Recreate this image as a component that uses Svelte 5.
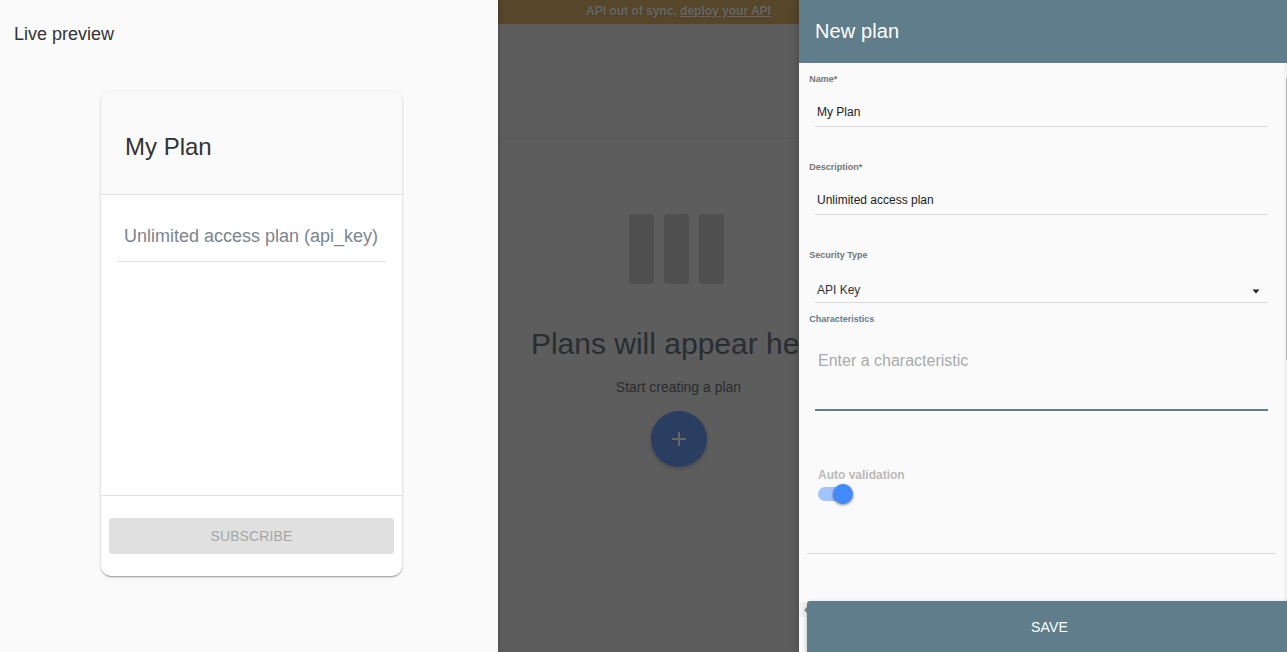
<script>
  let name = $state('My Plan');
  let description = $state('Unlimited access plan');
  let autoValidation = $state(true);
</script>

<div class="app">
  <section class="preview">
    <h2>Live preview</h2>
    <article class="card">
      <header>{name}</header>
      <div class="features">
        <p>{description} (api_key)</p>
      </div>
      <footer><button class="subscribe" disabled>SUBSCRIBE</button></footer>
    </article>
  </section>

  <main class="backdrop">
    <div class="inner">
      <div class="banner"><span>API out of sync, <a href="#deploy">deploy your API</a></span></div>
      <div class="toolbar"></div>
      <div class="columns"><i></i><i></i><i></i></div>
      <h1>Plans will appear here</h1>
      <p class="hint">Start creating a plan</p>
      <button class="fab" aria-label="Add plan">
        <svg width="24" height="24" viewBox="0 0 24 24"><path d="M19 13h-6v6h-2v-6H5v-2h6V5h2v6h6z" fill="currentColor" /></svg>
      </button>
    </div>
  </main>

  <aside class="panel">
    <header class="title">New plan</header>
    <div class="body">
      <div class="form">
        <div class="field">
          <label for="name">Name*</label>
          <input id="name" bind:value={name} />
        </div>
        <div class="field">
          <label for="desc">Description*</label>
          <input id="desc" bind:value={description} />
        </div>
        <div class="field select">
          <span class="label">Security Type</span>
          <div class="value">
            <span>API Key</span>
            <svg width="8" height="5" viewBox="0 0 8 5"><path d="M0.5 0.5h7L4 4.5z" fill="#212121" /></svg>
          </div>
        </div>
        <div class="field chips">
          <span class="label">Characteristics</span>
          <div class="entry">Enter a characteristic</div>
        </div>
        <div class="auto">
          <span>Auto validation</span>
          <button class="switch" class:on={autoValidation} aria-label="Auto validation" onclick={() => (autoValidation = !autoValidation)}>
            <i></i>
          </button>
        </div>
      </div>
      <div class="track"><div class="thumb"></div></div>
    </div>
    <div class="bottom">
      <div class="hscroll"><svg width="3" height="8" viewBox="0 0 3 8"><path d="M3 1v6L0 4z" fill="#8b8b8b" /></svg></div>
      <button class="save">SAVE</button>
    </div>
  </aside>
</div>

<style>
  :global(body) { margin: 0; overflow: hidden; }
  .app, .app * { box-sizing: border-box; }
  .app {
    display: grid;
    grid-template-columns: 498px 301px 488px;
    width: 1287px;
    height: 652px;
    overflow: hidden;
    font-family: "Liberation Sans", Arial, sans-serif;
    color: #333;
  }
  h1, h2, p { margin: 0; font-weight: 400; }
  button { border: 0; padding: 0; font-family: inherit; }

  .preview { background: #fafafa; z-index: 1; box-shadow: 0 0 6px rgba(0, 0, 0, .24); }
  .preview h2 { padding: 23px 14px 0; font-size: 18px; line-height: 22px; height: 91px; }
  .card {
    display: flex;
    flex-direction: column;
    width: 301px;
    height: 485px;
    margin-left: 101px;
    background: #fff;
    border-radius: 10px;
    overflow: hidden;
    box-shadow: 0 1px 3px 0 rgba(0, 0, 0, .2), 0 1px 1px 0 rgba(0, 0, 0, .14), 0 2px 1px -1px rgba(0, 0, 0, .12);
  }
  .card header {
    height: 104px;
    padding: 8px 24px 0;
    line-height: 96px;
    font-size: 24px;
    background: #fafafa;
    border-bottom: 1px solid #e0e0e0;
  }
  .features { flex: 1; padding: 16px; }
  .features p {
    height: 51px;
    line-height: 51px;
    padding-right: 1px;
    font-size: 18px;
    text-align: center;
    white-space: nowrap;
    color: #7a858e;
    border-bottom: 1px solid #e0e0e0;
  }
  .card footer { height: 81px; padding: 22px 8px; border-top: 1px solid #e0e0e0; }
  .subscribe {
    display: block;
    width: 285px;
    height: 36px;
    font-size: 14px;
    letter-spacing: .14px;
    border-radius: 3px;
    background: #e0e0e0;
    color: #a6a6a6;
  }

  .backdrop { background: #5d5d5d; overflow: hidden; }
  .inner { width: 361px; display: flex; flex-direction: column; align-items: center; }
  .banner {
    width: 100%;
    height: 24px;
    line-height: 22px;
    text-align: center;
    font-size: 12px;
    font-weight: 700;
    background: #56462a;
    color: #666;
    text-shadow: 0 1px 2px rgba(0, 0, 0, .12);
  }
  .banner a { color: inherit; }
  .toolbar { width: 100%; height: 115px; border-bottom: 1px solid #585858; }
  .columns { display: flex; gap: 10px; margin: 75px 4px 0 0; }
  .columns i { width: 25px; height: 70px; border-radius: 4px; background: #4f4f4f; }
  h1 { margin-top: 42px; font-size: 30px; line-height: 36px; color: #292d32; white-space: nowrap; }
  .hint { margin-top: 15px; font-size: 14px; line-height: 20px; color: #292b2d; }
  .fab {
    display: grid;
    place-items: center;
    width: 56px;
    height: 56px;
    margin-top: 14px;
    border-radius: 50%;
    background: #293e60;
    color: #666;
    box-shadow: 0 2px 4px rgba(0, 0, 0, .2);
  }

  .panel {
    display: flex;
    flex-direction: column;
    min-width: 0;
    height: 652px;
    overflow: hidden;
    z-index: 1;
    background: #fafafa;
    box-shadow: 0 0 8px rgba(0, 0, 0, .28);
  }
  .title { height: 63px; padding-left: 16px; line-height: 62px; font-size: 20px; letter-spacing: .1px; background: #607d8b; color: #fff; }
  .body { display: flex; height: 538px; }
  .form { width: 485px; padding: 0 8px; }
  .track { width: 3px; padding: 15px 0 0 2px; background: #f1f1f1; }
  .thumb { height: 282px; background: #b9b9b9; }
  .field { height: 88px; padding: 10px 8px 0; }
  label, .label {
    display: block;
    height: 12px;
    margin-left: -5.75px;
    font-size: 9px;
    line-height: 12px;
    font-weight: 700;
    color: #757575;
  }
  input {
    display: block;
    width: 453px;
    height: 30px;
    margin-top: 12px;
    padding: 0 2px;
    border: 0;
    border-bottom: 1px solid #dadada;
    outline: none;
    background: none;
    font: 12px "Liberation Sans", Arial, sans-serif;
    color: #212121;
  }
  .select { height: 64px; }
  .value {
    display: flex;
    align-items: center;
    justify-content: space-between;
    width: 453px;
    height: 27px;
    margin-top: 15px;
    padding: 0 8px 0 2px;
    border-bottom: 1px solid #dadada;
    font-size: 12px;
    color: #333;
  }
  .value span { padding-top: 2px; }
  .value svg { margin-top: 4px; }
  .chips { height: 163px; }
  .chips .label { color: #607d8b; }
  .entry {
    width: 453px;
    height: 86px;
    padding: 26px 3px 0;
    line-height: 20px;
    font-size: 16px;
    color: #aaa;
    border-bottom: 2px solid #607d8b;
  }
  .auto { height: 88px; width: 469px; padding: 1px 11px 0; border-bottom: 1px solid #dadada; }
  .auto span { display: block; height: 16px; line-height: 16px; font-size: 12px; font-weight: 700; color: #bababa; }
  .switch { display: flex; align-items: center; width: 33px; height: 14px; margin-top: 4px; border-radius: 7px; background: #bbb; }
  .switch.on { background: #a2c4fd; }
  .switch i { flex: none; width: 20px; height: 20px; border-radius: 50%; background: #fafafa; box-shadow: 0 1px 3px rgba(0, 0, 0, .5); }
  .switch.on i { margin-left: 15px; background: #448aff; }
  .bottom { display: flex; height: 51px; }
  .hscroll { flex: none; width: 8px; height: 15px; margin-top: 1px; padding: 4px 0 0 5px; background: #f1f1f1; line-height: 0; }
  .save {
    flex: none;
    width: 485px;
    height: 54px;
    padding-bottom: 2px;
    border-radius: 3px;
    font-size: 14px;
    letter-spacing: .14px;
    background: #607d8b;
    color: #fff;
    box-shadow: 0 2px 5px rgba(0, 0, 0, .26);
  }
</style>
